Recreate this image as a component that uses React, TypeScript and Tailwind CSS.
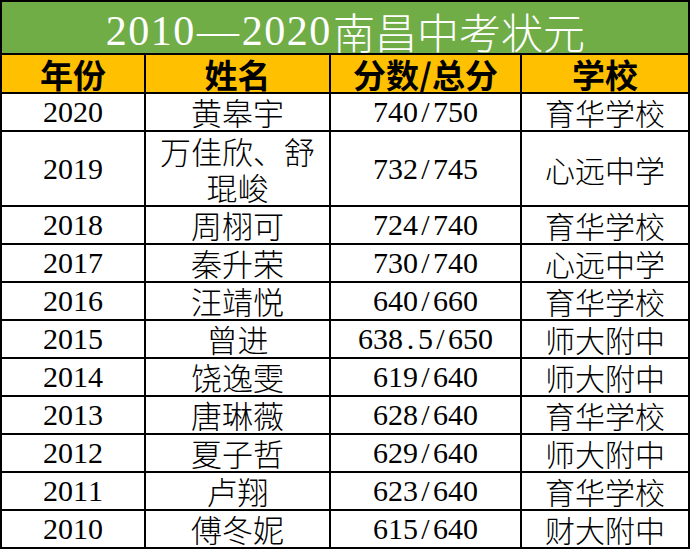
const rows: [string, string, string, string][] = [
  ['2020', '黄皋宇', '740/750', '育华学校'],
  ['2019', '万佳欣、舒\n琨峻', '732/745', '心远中学'],
  ['2018', '周栩可', '724/740', '育华学校'],
  ['2017', '秦升荣', '730/740', '心远中学'],
  ['2016', '汪靖悦', '640/660', '育华学校'],
  ['2015', '曾进', '638.5/650', '师大附中'],
  ['2014', '饶逸雯', '619/640', '师大附中'],
  ['2013', '唐琳薇', '628/640', '育华学校'],
  ['2012', '夏子哲', '629/640', '师大附中'],
  ['2011', '卢翔', '623/640', '育华学校'],
  ['2010', '傅冬妮', '615/640', '财大附中'],
];

// half-width cells so digits, "/" and "." line up like the Song font in the sheet
function Mono({ text, w = 'w-[0.5em]' }: { text: string; w?: string }) {
  return (
    <span className="inline-flex">
      {text.split('').map((ch, i) => (
        <span key={i} className={`inline-block text-center ${w}`}>
          {ch}
        </span>
      ))}
    </span>
  );
}

const cell = 'bg-white flex items-center justify-center text-black leading-[32px]';

export default function App() {
  return (
    <div className="w-[692px] h-[552px] bg-white font-['Liberation_Serif','Noto_Sans_CJK_SC',serif]">
      <div className="grid w-fit grid-cols-[142px_183px_189px_166px] grid-rows-[51px_37px_36px_73px_repeat(9,36px)] gap-[2px] bg-black p-[2px]">
        <div className="col-span-4 flex items-center justify-center bg-[#70ad47] pt-[6px] text-[42px] leading-[40px] text-white">
          <Mono text="2010" w="w-[22.5px]" />
          <span className="inline-block w-[46px] text-center">—</span>
          <Mono text="2020" w="w-[22.5px]" />
          <span className="ml-[2px] font-['Noto_Sans_CJK_SC',sans-serif] font-light">南昌中考状元</span>
        </div>

        {['年份', '姓名', '分数/总分', '学校'].map((h) => (
          <div
            key={h}
            className="flex items-start justify-center bg-[#ffc000] pt-[3px] font-['Noto_Sans_CJK_SC',sans-serif] text-[33px] font-bold leading-[33px] text-black"
          >
            {h}
          </div>
        ))}

        {rows.map(([year, name, score, school]) => (
          <div key={year} className="contents">
            <div className={`${cell} text-[30px]`}>
              <Mono text={year} />
            </div>
            <div className={`${cell} whitespace-pre-line text-center font-['Noto_Sans_CJK_SC',sans-serif] text-[31px] font-light leading-[36px]`}>
              {name}
            </div>
            <div className={`${cell} text-[30px]`}>
              <Mono text={score} />
            </div>
            <div className={`${cell} font-['Noto_Sans_CJK_SC',sans-serif] text-[30px] font-light`}>
              {school}
            </div>
          </div>
        ))}
      </div>
    </div>
  );
}
